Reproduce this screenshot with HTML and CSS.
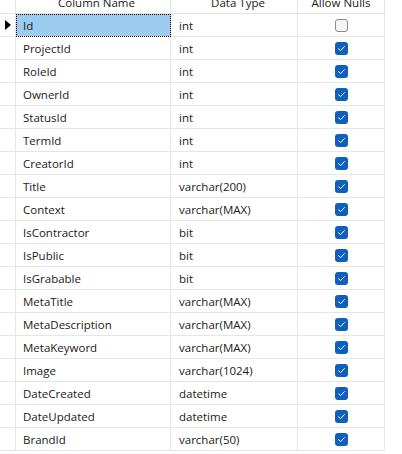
FILE: index.html
```html
<!DOCTYPE html>
<html>
<head>
<meta charset="utf-8">
<link rel="stylesheet" href="styles.css">
</head>
<body>
<div class="grid">
  <div class="row head">
    <div class="cell sel"></div>
    <div class="cell name"><span class="htxt">Column Name</span></div>
    <div class="cell type"><span class="htxt">Data Type</span></div>
    <div class="cell nulls"><span class="htxt">Allow Nulls</span></div>
  </div>
  <div class="row">
    <div class="cell sel"><span class="arrow"></span></div>
    <div class="cell name active">Id</div>
    <div class="cell type">int</div>
    <div class="cell nulls"><span class="cb off"></span></div>
  </div>
  <div class="row"><div class="cell sel"></div><div class="cell name">ProjectId</div><div class="cell type">int</div><div class="cell nulls"><span class="cb on"><svg viewBox="0 0 13 13"><path d="M3.6 6.8 L5.6 8.6 L9.4 4.6"/></svg></span></div></div>
  <div class="row"><div class="cell sel"></div><div class="cell name">RoleId</div><div class="cell type">int</div><div class="cell nulls"><span class="cb on"><svg viewBox="0 0 13 13"><path d="M3.6 6.8 L5.6 8.6 L9.4 4.6"/></svg></span></div></div>
  <div class="row"><div class="cell sel"></div><div class="cell name">OwnerId</div><div class="cell type">int</div><div class="cell nulls"><span class="cb on"><svg viewBox="0 0 13 13"><path d="M3.6 6.8 L5.6 8.6 L9.4 4.6"/></svg></span></div></div>
  <div class="row"><div class="cell sel"></div><div class="cell name">StatusId</div><div class="cell type">int</div><div class="cell nulls"><span class="cb on"><svg viewBox="0 0 13 13"><path d="M3.6 6.8 L5.6 8.6 L9.4 4.6"/></svg></span></div></div>
  <div class="row"><div class="cell sel"></div><div class="cell name">TermId</div><div class="cell type">int</div><div class="cell nulls"><span class="cb on"><svg viewBox="0 0 13 13"><path d="M3.6 6.8 L5.6 8.6 L9.4 4.6"/></svg></span></div></div>
  <div class="row"><div class="cell sel"></div><div class="cell name">CreatorId</div><div class="cell type">int</div><div class="cell nulls"><span class="cb on"><svg viewBox="0 0 13 13"><path d="M3.6 6.8 L5.6 8.6 L9.4 4.6"/></svg></span></div></div>
  <div class="row"><div class="cell sel"></div><div class="cell name">Title</div><div class="cell type">varchar(200)</div><div class="cell nulls"><span class="cb on"><svg viewBox="0 0 13 13"><path d="M3.6 6.8 L5.6 8.6 L9.4 4.6"/></svg></span></div></div>
  <div class="row"><div class="cell sel"></div><div class="cell name">Context</div><div class="cell type">varchar(MAX)</div><div class="cell nulls"><span class="cb on"><svg viewBox="0 0 13 13"><path d="M3.6 6.8 L5.6 8.6 L9.4 4.6"/></svg></span></div></div>
  <div class="row"><div class="cell sel"></div><div class="cell name">IsContractor</div><div class="cell type">bit</div><div class="cell nulls"><span class="cb on"><svg viewBox="0 0 13 13"><path d="M3.6 6.8 L5.6 8.6 L9.4 4.6"/></svg></span></div></div>
  <div class="row"><div class="cell sel"></div><div class="cell name">IsPublic</div><div class="cell type">bit</div><div class="cell nulls"><span class="cb on"><svg viewBox="0 0 13 13"><path d="M3.6 6.8 L5.6 8.6 L9.4 4.6"/></svg></span></div></div>
  <div class="row"><div class="cell sel"></div><div class="cell name">IsGrabable</div><div class="cell type">bit</div><div class="cell nulls"><span class="cb on"><svg viewBox="0 0 13 13"><path d="M3.6 6.8 L5.6 8.6 L9.4 4.6"/></svg></span></div></div>
  <div class="row"><div class="cell sel"></div><div class="cell name">MetaTitle</div><div class="cell type">varchar(MAX)</div><div class="cell nulls"><span class="cb on"><svg viewBox="0 0 13 13"><path d="M3.6 6.8 L5.6 8.6 L9.4 4.6"/></svg></span></div></div>
  <div class="row"><div class="cell sel"></div><div class="cell name">MetaDescription</div><div class="cell type">varchar(MAX)</div><div class="cell nulls"><span class="cb on"><svg viewBox="0 0 13 13"><path d="M3.6 6.8 L5.6 8.6 L9.4 4.6"/></svg></span></div></div>
  <div class="row"><div class="cell sel"></div><div class="cell name">MetaKeyword</div><div class="cell type">varchar(MAX)</div><div class="cell nulls"><span class="cb on"><svg viewBox="0 0 13 13"><path d="M3.6 6.8 L5.6 8.6 L9.4 4.6"/></svg></span></div></div>
  <div class="row"><div class="cell sel"></div><div class="cell name">Image</div><div class="cell type">varchar(1024)</div><div class="cell nulls"><span class="cb on"><svg viewBox="0 0 13 13"><path d="M3.6 6.8 L5.6 8.6 L9.4 4.6"/></svg></span></div></div>
  <div class="row"><div class="cell sel"></div><div class="cell name">DateCreated</div><div class="cell type">datetime</div><div class="cell nulls"><span class="cb on"><svg viewBox="0 0 13 13"><path d="M3.6 6.8 L5.6 8.6 L9.4 4.6"/></svg></span></div></div>
  <div class="row"><div class="cell sel"></div><div class="cell name">DateUpdated</div><div class="cell type">datetime</div><div class="cell nulls"><span class="cb on"><svg viewBox="0 0 13 13"><path d="M3.6 6.8 L5.6 8.6 L9.4 4.6"/></svg></span></div></div>
  <div class="row"><div class="cell sel"></div><div class="cell name">BrandId</div><div class="cell type">varchar(50)</div><div class="cell nulls"><span class="cb on"><svg viewBox="0 0 13 13"><path d="M3.6 6.8 L5.6 8.6 L9.4 4.6"/></svg></span></div></div>
</div>
</body>
</html>
```
FILE: styles.css
```css
html, body {
  margin: 0;
  padding: 0;
  background: #ffffff;
}
body {
  font-family: "Open Sans", "Noto Sans", sans-serif;
  font-size: 11.5px;
  color: #1a1a1a;
  width: 402px;
  height: 454px;
  overflow: hidden;
}
.grid {
  display: flex;
  flex-direction: column;
  width: 385px;
}
.row {
  display: grid;
  grid-template-columns: 16px 155px 127px 87px;
  height: 23px;
}
.row.head {
  height: 14px;
}
.cell {
  box-sizing: border-box;
  border-right: 1px solid #e6e6e6;
  border-bottom: 1px solid #e6e6e6;
  display: flex;
  align-items: center;
  overflow: hidden;
  white-space: nowrap;
}
.head .cell {
  border-color: #e3e3e3;
  justify-content: center;
  align-items: flex-start;
}
.htxt {
  display: block;
  line-height: 22px;
  margin-top: -8px;
}
.name {
  padding-left: 7px;
}
.type {
  padding-left: 8px;
}
.nulls {
  justify-content: center;
}
.sel {
  justify-content: center;
}
.active {
  background: #9ccbf0;
  outline: 1px dotted #000;
  outline-offset: -1px;
  border-right-color: transparent;
}
.arrow {
  width: 0;
  height: 0;
  border-top: 5px solid transparent;
  border-bottom: 5px solid transparent;
  border-left: 6px solid #000;
  margin-left: 1px;
}
.cb {
  width: 13px;
  height: 13px;
  box-sizing: border-box;
  border-radius: 3px;
  display: block;
}
.cb.off {
  background: #f4f4f4;
  border: 1px solid #8c8c8c;
}
.cb.on {
  background: #0f5fbe;
}
.cb svg {
  display: block;
  width: 13px;
  height: 13px;
}
.cb path {
  fill: none;
  stroke: #ffffff;
  stroke-width: 1;
  stroke-linecap: round;
  stroke-linejoin: round;
}
```
